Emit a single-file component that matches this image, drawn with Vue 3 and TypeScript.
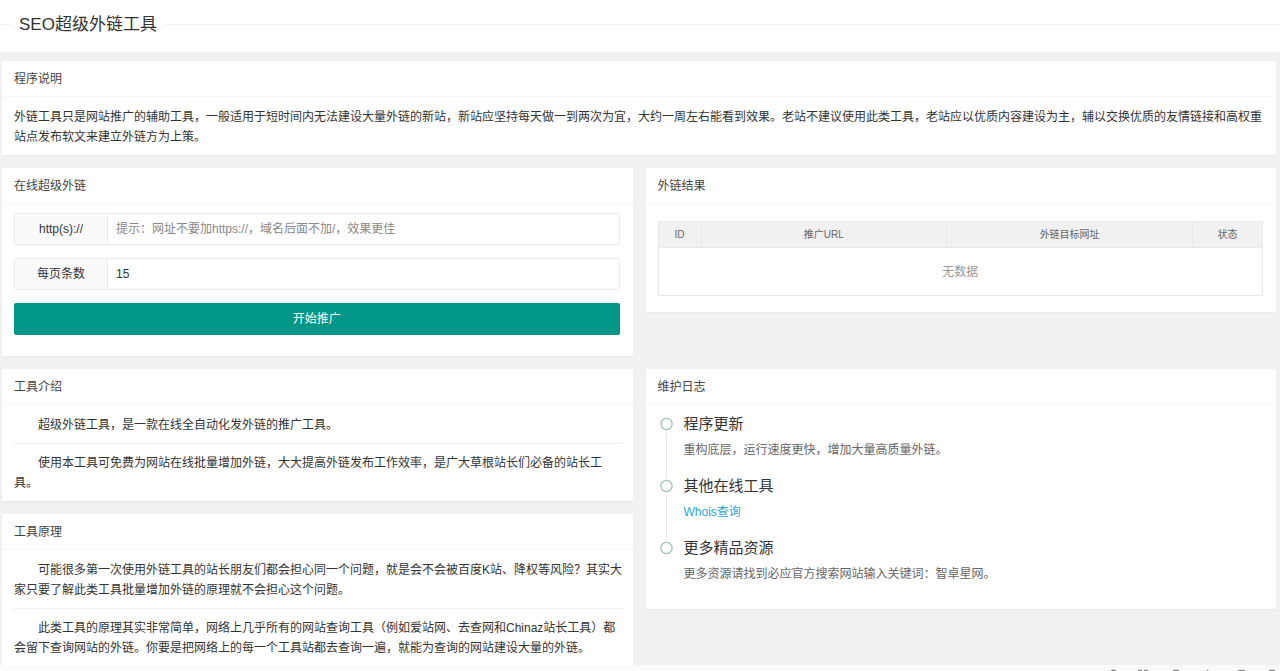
<script setup lang="ts">
import { ref } from 'vue'

interface LogEntry {
  title: string
  text: string
  link?: boolean
}

const url = ref('')
const count = ref('15')

const intro: string[] = [
  '超级外链工具，是一款在线全自动化发外链的推广工具。',
  '使用本工具可免费为网站在线批量增加外链，大大提高外链发布工作效率，是广大草根站长们必备的站长工具。',
]
const principle: string[] = [
  '可能很多第一次使用外链工具的站长朋友们都会担心同一个问题，就是会不会被百度K站、降权等风险？其实大家只要了解此类工具批量增加外链的原理就不会担心这个问题。',
  '此类工具的原理其实非常简单，网络上几乎所有的网站查询工具（例如爱站网、去查网和Chinaz站长工具）都会留下查询网站的外链。你要是把网络上的每一个工具站都去查询一遍，就能为查询的网站建设大量的外链。',
]
const log: LogEntry[] = [
  { title: '程序更新', text: '重构底层，运行速度更快，增加大量高质量外链。' },
  { title: '其他在线工具', text: 'Whois查询', link: true },
  { title: '更多精品资源', text: '更多资源请找到必应官方搜索网站输入关键词：智卓星网。' },
]
</script>

<template>
  <div class="page">
    <header class="top">
      <h1>SEO超级外链工具</h1>
    </header>

    <main class="content">
      <section class="card">
        <h2>程序说明</h2>
        <div class="body">
          <p>外链工具只是网站推广的辅助工具，一般适用于短时间内无法建设大量外链的新站，新站应坚持每天做一到两次为宜，大约一周左右能看到效果。老站不建议使用此类工具，老站应以优质内容建设为主，辅以交换优质的友情链接和高权重站点发布软文来建立外链方为上策。</p>
        </div>
      </section>

      <div class="row">
        <section class="card">
          <h2>在线超级外链</h2>
          <form class="body form" @submit.prevent>
            <div class="field">
              <label for="url">http(s)://</label>
              <input id="url" v-model="url" type="text" placeholder="提示：网址不要加https://，域名后面不加/，效果更佳" />
            </div>
            <div class="field">
              <label for="count">每页条数</label>
              <input id="count" v-model="count" type="text" />
            </div>
            <button class="submit" type="submit">开始推广</button>
          </form>
        </section>

        <section class="card">
          <h2>外链结果</h2>
          <div class="body results">
            <table class="result">
              <colgroup>
                <col class="c-id" />
                <col />
                <col />
                <col class="c-state" />
              </colgroup>
              <thead>
                <tr>
                  <th>ID</th>
                  <th>推广URL</th>
                  <th>外链目标网址</th>
                  <th>状态</th>
                </tr>
              </thead>
              <tbody>
                <tr>
                  <td colspan="4">无数据</td>
                </tr>
              </tbody>
            </table>
          </div>
        </section>
      </div>

      <div class="row">
        <div class="stack">
          <section class="card">
            <h2>工具介绍</h2>
            <div class="body article">
              <p v-for="(t, i) in intro" :key="i">{{ t }}</p>
            </div>
          </section>
          <section class="card">
            <h2>工具原理</h2>
            <div class="body article">
              <p v-for="(t, i) in principle" :key="i">{{ t }}</p>
            </div>
          </section>
        </div>

        <section class="card">
          <h2>维护日志</h2>
          <ul class="body timeline">
            <li v-for="e in log" :key="e.title">
              <span class="axis">
                <svg width="15" height="18" viewBox="0 0 15 18" aria-hidden="true">
                  <circle cx="7.5" cy="9" r="5.6" fill="#fff" stroke="#9fc4ae" stroke-width="1.3" />
                </svg>
              </span>
              <div class="entry">
                <h3>{{ e.title }}</h3>
                <a v-if="e.link" href="#">{{ e.text }}</a>
                <p v-else>{{ e.text }}</p>
              </div>
            </li>
          </ul>
        </section>
      </div>
    </main>

    <footer class="dock">
      <svg width="180" height="6" viewBox="0 0 180 6" fill="none" stroke="#8c8c8c" stroke-width="1.4" aria-hidden="true">
        <path d="M11 6.2q2.500-1.800 5 0M38 5.500h4M44 5.500h4M73 5.800q3-1 6 0M107 6l1-1M138 5.800q4-.8 7 0M169 5.800q3-1 6 0" />
      </svg>
    </footer>
  </div>
</template>

<style>
body {
  margin: 0;
  background: #f1f1f1;
  overflow: hidden;
}
</style>

<style scoped>
.page {
  height: 100vh;
  overflow: hidden;
  background: #f1f1f1;
  color: #333;
  font: 12px/20px "Liberation Sans", "Noto Sans CJK SC", sans-serif;
}
.page * {
  box-sizing: border-box;
}
h1, h2, h3, p, ul {
  margin: 0;
  padding: 0;
  font-weight: 400;
}
.top {
  height: 52px;
  padding-top: 12px;
  background: #fff;
}
.top h1 {
  display: flex;
  align-items: center;
  gap: 8px;
  font-size: 17px;
  line-height: 25px;
}
.top h1::before,
.top h1::after {
  content: "";
  height: 1px;
  background: #eee;
}
.top h1::before {
  width: 11px;
}
.top h1::after {
  flex: 1;
}
.content {
  display: flex;
  flex-direction: column;
  gap: 13px;
  padding: 9px 4px 0 2px;
}
.row {
  display: grid;
  grid-template-columns: minmax(0, 1fr) minmax(0, 1fr);
  align-items: start;
  gap: 13px;
}
.stack {
  display: flex;
  flex-direction: column;
  gap: 13px;
}
.card {
  background: #fff;
  border-radius: 1px;
  box-shadow: 0 1px 2px rgba(0, 0, 0, 0.04);
}
.card h2 {
  height: 36px;
  padding: 0 12px;
  border-bottom: 1px solid #f6f6f6;
  color: #444;
  font-size: 12px;
  line-height: 37px;
}
.body {
  padding: 10px 12px 8px;
}
.form {
  display: flex;
  flex-direction: column;
  gap: 13px;
  padding: 9px 13px 21px 12px;
}
.results {
  padding: 9px 13px 8px 12px;
}
.field {
  display: flex;
  height: 32px;
  border: 1px solid #eaeaea;
  border-radius: 2px;
}
.field label {
  width: 93px;
  border-right: 1px solid #eaeaea;
  background: #fafafa;
  line-height: 30px;
  text-align: center;
}
.field input {
  flex: 1;
  min-width: 0;
  padding: 0 8px;
  border: 0;
  outline: 0;
  background: none;
  color: #333;
  font: inherit;
}
.field input::placeholder {
  color: #888;
}
.submit {
  height: 32px;
  padding: 0;
  border: 0;
  border-radius: 2px;
  background: #009688;
  color: #fff;
  font: inherit;
}
.result {
  width: 100%;
  margin: 8px 0;
  border-collapse: collapse;
  table-layout: fixed;
}
.c-id {
  width: 43px;
}
.c-state {
  width: 70px;
}
.result th {
  height: 26px;
  padding: 0;
  border: 1px solid #e8e8e8;
  background: #f1f1f1;
  color: #666;
  font-size: 10px;
  font-weight: 400;
}
.result td {
  height: 48px;
  padding: 0;
  border: 1px solid #e8e8e8;
  color: #999;
  text-align: center;
}
.article {
  padding-right: 10px;
}
.article p {
  text-indent: 24px;
}
.article p + p {
  margin-top: 8px;
  padding-top: 9px;
  border-top: 1px solid #eee;
}
.timeline {
  list-style: none;
}
.timeline li {
  display: flex;
  gap: 9px;
}
.axis {
  display: flex;
  flex-direction: column;
  align-items: center;
  width: 17px;
}
.timeline li:not(:last-child) .axis::after {
  content: "";
  flex: 1;
  width: 1px;
  background: #e6e6e6;
}
.entry {
  padding-bottom: 17px;
}
.entry h3 {
  margin-bottom: 7px;
  font-size: 15px;
  line-height: 18px;
}
.entry p,
.entry a {
  display: block;
  color: #666;
}
.entry a {
  color: #2ba3d4;
  text-decoration: none;
}
.dock {
  position: fixed;
  right: 0;
  bottom: 0;
  left: 0;
  display: flex;
  justify-content: flex-end;
  height: 6px;
  background: #fafafa;
}
</style>
